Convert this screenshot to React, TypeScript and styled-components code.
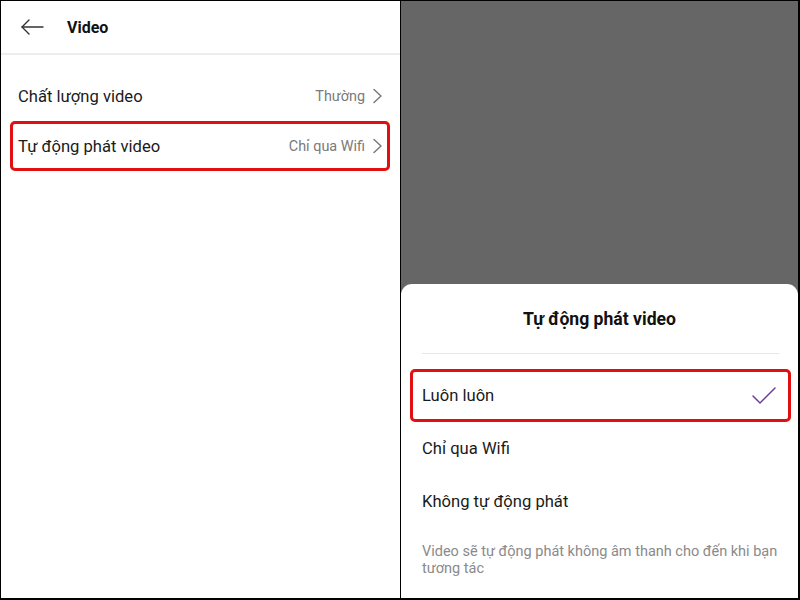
import styled, { createGlobalStyle } from 'styled-components';

const GlobalStyle = createGlobalStyle`
	html, body {
		margin: 0;
		padding: 0;
		background: #fff;
	}
	body {
		font-family: Roboto, 'Noto Sans', 'DejaVu Sans', sans-serif;
		color: #1a1a1a;
	}
`;

const Frame = styled.div`
	width: 800px;
	height: 600px;
	box-sizing: border-box;
	border: 1px solid #000;
	border-right-width: 2px;
	border-bottom-width: 2px;
	display: flex;
	overflow: hidden;
`;

const LeftPanel = styled.section`
	width: 399px;
	flex-shrink: 0;
	border-right: 1px solid #000;
	background: #fff;
	display: flex;
	flex-direction: column;
`;

const Header = styled.header`
	height: 52px;
	border-bottom: 2px solid #ededed;
	display: flex;
	align-items: center;
	padding-left: 19px;
	gap: 23px;
`;

const BackButton = styled.span`
	display: flex;
	width: 24px;
	height: 24px;
	color: #333;
`;

const Title = styled.h1`
	margin: 0;
	font-size: 16px;
	font-weight: 700;
	color: #111;
`;

const SettingList = styled.div`
	padding-top: 16px;
	display: flex;
	flex-direction: column;
`;

const SettingRow = styled.div<{ $highlight?: boolean }>`
	height: 50px;
	box-sizing: border-box;
	margin: 0 10px 0 9px;
	padding: 0 5px 0 5px;
	border: 3px solid ${(p) => (p.$highlight ? '#e01010' : 'transparent')};
	border-radius: 5px;
	display: flex;
	align-items: center;
	justify-content: space-between;
`;

const RowLabel = styled.span`
	font-size: 16.6px;
	color: #1a1a1a;
`;

const RowValue = styled.span`
	display: flex;
	align-items: center;
	gap: 8px;
	font-size: 14.4px;
	color: #7a7a7a;
`;

const RightPanel = styled.section`
	flex: 1;
	background: #666666;
	display: flex;
	flex-direction: column;
	justify-content: flex-end;
`;

const Sheet = styled.div`
	height: 314px;
	background: #fff;
	border-radius: 11px 11px 0 0;
	display: flex;
	flex-direction: column;
`;

const SheetTitle = styled.h2`
	margin: 0;
	height: 69px;
	display: flex;
	align-items: center;
	justify-content: center;
	font-size: 17.6px;
	font-weight: 700;
	color: #111;
`;

const Divider = styled.hr`
	margin: 0 19px 0 21px;
	border: none;
	border-top: 1px solid #e6e6e6;
`;

const OptionList = styled.div`
	padding-top: 15px;
	display: flex;
	flex-direction: column;
`;

const Option = styled.div<{ $highlight?: boolean }>`
	height: 53px;
	box-sizing: border-box;
	margin: 0 7px 0 9px;
	padding: 0 12px 0 9px;
	border: 3px solid ${(p) => (p.$highlight ? '#e01010' : 'transparent')};
	border-radius: 5px;
	display: flex;
	align-items: center;
	justify-content: space-between;
	font-size: 16.6px;
	color: #1a1a1a;
`;

const Note = styled.p`
	margin: 0;
	padding: 16px 18px 0 21px;
	font-size: 14.5px;
	line-height: 16.5px;
	color: #8a8a8a;
`;

const ArrowLeft = () => (
	<svg width="24" height="24" viewBox="0 0 24 24" fill="none" stroke="currentColor" strokeWidth="1.4" strokeLinecap="round" strokeLinejoin="round">
		<path d="M23 12H2" />
		<path d="M9 5l-7 7 7 7" />
	</svg>
);

const Chevron = () => (
	<svg width="9" height="16" viewBox="0 0 9 16" fill="none" stroke="#777" strokeWidth="1.4" strokeLinecap="round" strokeLinejoin="round">
		<path d="M1 1.5l7 6.5-7 6.5" />
	</svg>
);

const Check = () => (
	<svg width="24" height="18" viewBox="0 0 24 18" fill="none" stroke="#6b3fa0" strokeWidth="1.5" strokeLinecap="round" strokeLinejoin="round">
		<path d="M1 9l7 7L23 1" />
	</svg>
);

const settings = [
	{ label: 'Chất lượng video', value: 'Thường' },
	{ label: 'Tự động phát video', value: 'Chỉ qua Wifi', highlight: true },
];

const options = [
	{ label: 'Luôn luôn', selected: true },
	{ label: 'Chỉ qua Wifi' },
	{ label: 'Không tự động phát' },
];

const App = () => {
	return (
		<>
			<GlobalStyle />
			<Frame>
				<LeftPanel>
					<Header>
						<BackButton>
							<ArrowLeft />
						</BackButton>
						<Title>Video</Title>
					</Header>
					<SettingList>
						{settings.map((s) => (
							<SettingRow key={s.label} $highlight={s.highlight}>
								<RowLabel>{s.label}</RowLabel>
								<RowValue>
									{s.value}
									<Chevron />
								</RowValue>
							</SettingRow>
						))}
					</SettingList>
				</LeftPanel>
				<RightPanel>
					<Sheet>
						<SheetTitle>Tự động phát video</SheetTitle>
						<Divider />
						<OptionList>
							{options.map((o) => (
								<Option key={o.label} $highlight={o.selected}>
									{o.label}
									{o.selected && <Check />}
								</Option>
							))}
						</OptionList>
						<Note>Video sẽ tự động phát không âm thanh cho đến khi bạn tương tác</Note>
					</Sheet>
				</RightPanel>
			</Frame>
		</>
	);
};

export default App;
